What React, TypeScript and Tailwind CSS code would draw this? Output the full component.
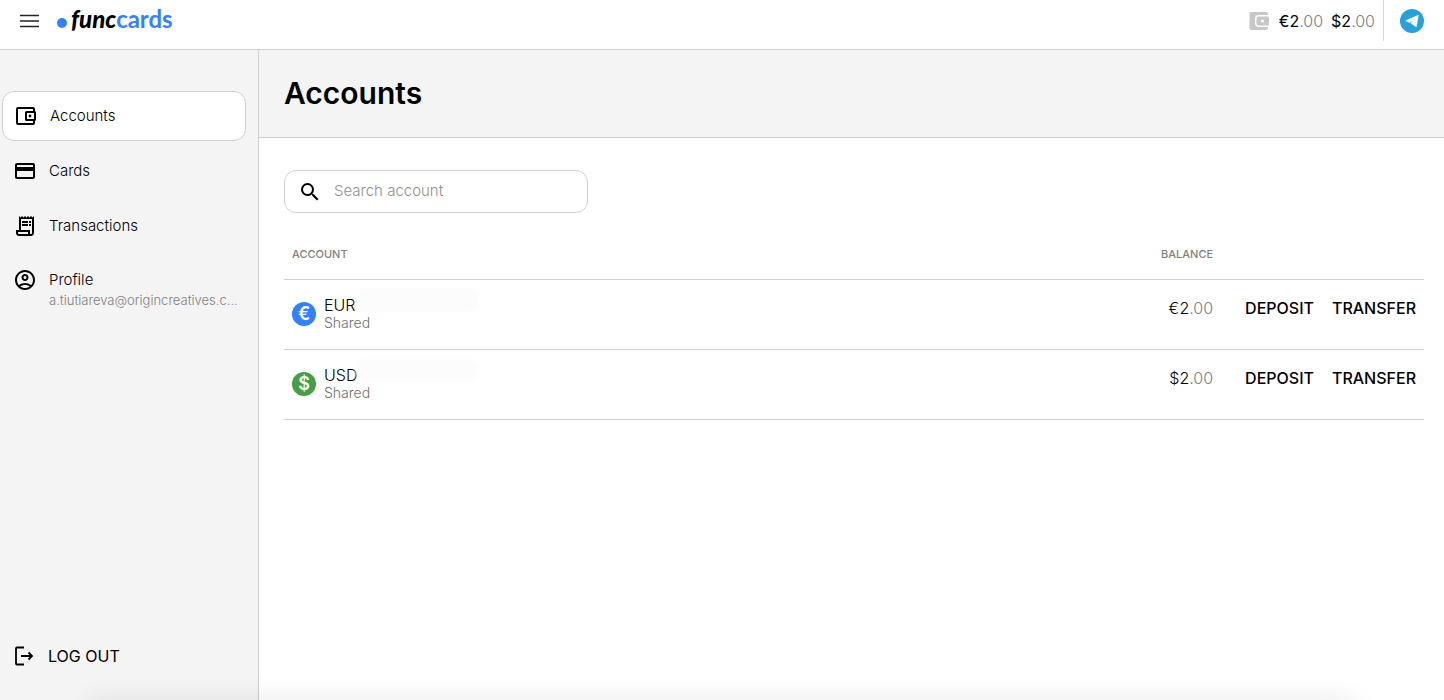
import React from 'react';
import {
  MdCreditCard,
  MdOutlineAccountCircle,
  MdOutlineReceiptLong,
  MdSearch,
} from 'react-icons/md';

type Account = {
  currency: string;
  symbol: string;
  owner: string;
  whole: string;
  cents: string;
  color: string;
};

const accounts: Account[] = [
  { currency: 'EUR', symbol: '€', owner: 'Shared', whole: '2', cents: '.00', color: 'bg-[#3580ff]' },
  { currency: 'USD', symbol: '$', owner: 'Shared', whole: '2', cents: '.00', color: 'bg-[#43a047]' },
];

const WalletIcon: React.FC = () => (
  <svg viewBox="0 0 24 24" className="h-6 w-6 shrink-0" fill="none" stroke="currentColor" strokeWidth="2" aria-hidden="true">
    <path d="M20 8V5a1 1 0 0 0-1-1H4a1 1 0 0 0-1 1v14a1 1 0 0 0 1 1h15a1 1 0 0 0 1-1v-3" strokeLinejoin="round" />
    <rect x="12" y="8" width="9" height="8" rx="0.500" />
    <circle cx="16" cy="12" r="1.400" fill="currentColor" stroke="none" />
  </svg>
);

const WalletFilledIcon: React.FC = () => (
  <svg viewBox="0 0 24 24" className="h-6 w-6 text-[#c8c8c8]" aria-hidden="true">
    <path
      fill="currentColor"
      d="M4 3h15a2 2 0 0 1 2 2v1h-9a4 4 0 0 0-4 4v4a4 4 0 0 0 4 4h9v1a2 2 0 0 1-2 2H4a1.500 1.500 0 0 1-1.500-1.500v-15A1.500 1.500 0 0 1 4 3z"
    />
    <path
      fill="currentColor"
      fillRule="evenodd"
      d="M12 7.500h8.500a1.500 1.500 0 0 1 1.500 1.500v6a1.500 1.500 0 0 1-1.500 1.500H12a2.500 2.500 0 0 1-2.500-2.500v-4a2.500 2.500 0 0 1 2.500-2.500zm3.500 3a1.500 1.500 0 1 0 0 3 1.500 1.500 0 0 0 0-3z"
    />
  </svg>
);

const TelegramIcon: React.FC = () => (
  <svg viewBox="0 0 24 24" className="h-6 w-6" aria-hidden="true">
    <circle cx="12" cy="12" r="12" fill="#29a0da" />
    <path d="M18.300 6.300 5.600 11.800l4.200 1.700 5.400-4.200-4.300 4.900 5.400 3.700z" fill="#fff" stroke="#fff" strokeWidth="0.600" strokeLinejoin="round" />
  </svg>
);

const LogoutIcon: React.FC = () => (
  <svg viewBox="0 0 24 24" className="h-6 w-6" fill="none" stroke="currentColor" strokeWidth="1.800" aria-hidden="true">
    <path d="M12 3.500H5a1 1 0 0 0-1 1v15a1 1 0 0 0 1 1h7" />
    <path d="M9 12h11M16.500 8.500 20 12l-3.500 3.500" />
  </svg>
);

const Amount: React.FC<{ symbol: string; whole: string; cents: string }> = ({ symbol, whole, cents }) => (
  <span>
    {symbol}
    {whole}
    <span className="font-light text-[#808080]">{cents}</span>
  </span>
);

const Header: React.FC = () => (
  <header className="border-b border-[#d0d0d0] bg-white pb-2">
    <div className="flex h-[41px] items-center justify-between pr-5 pl-[18px]">
      <div className="flex items-center gap-[15px]">
        <button type="button" aria-label="Menu">
          <svg viewBox="0 0 24 24" className="h-6 w-6" stroke="#222" strokeWidth="1.600" aria-hidden="true">
            <path d="M2 6.500h19M2 12h19M2 17.500h19" />
          </svg>
        </button>
        <a href="#" className="flex items-center gap-1 pb-1 font-[Lato,sans-serif] text-2xl leading-7 font-bold">
          <span className="mt-2 h-2.5 w-2.5 rounded-full bg-[#3580ff]" />
          <span>
            <span className="font-black italic">func</span>
            <span className="text-[#3580ff]">cards</span>
          </span>
        </a>
      </div>

      <div className="flex h-full items-center">
        <WalletFilledIcon />
        <div className="flex gap-2 px-2 text-base font-normal">
          <Amount symbol="€" whole="2" cents=".00" />
          <Amount symbol="$" whole="2" cents=".00" />
        </div>
        <a href="#" aria-label="Telegram" className="flex h-full items-center border-l border-[#d8d8d8] pl-4">
          <TelegramIcon />
        </a>
      </div>
    </div>
  </header>
);

const Sidebar: React.FC = () => (
  <aside className="flex w-[259px] shrink-0 flex-col justify-between border-r border-[#d0d0d0] bg-[#f4f4f4] pt-[41px] pb-8">
    <nav className="flex flex-col gap-[5px] pr-3 pl-0.5">
      <a href="#" className="flex h-[50px] items-center gap-3 rounded-xl border border-[#d0d0d0] bg-white px-[11px]">
        <WalletIcon />
        Accounts
      </a>
      <a href="#" className="flex h-[50px] items-center gap-3 px-[11px]">
        <MdCreditCard className="h-6 w-6" />
        Cards
      </a>
      <a href="#" className="flex h-[50px] items-center gap-3 px-[11px]">
        <MdOutlineReceiptLong className="h-6 w-6" />
        Transactions
      </a>
      <a href="#" className="flex items-start gap-3 pt-3 pl-[11px]">
        <MdOutlineAccountCircle className="h-6 w-6 shrink-0" />
        <span>
          <span className="block leading-6">Profile</span>
          <span className="block text-[13px] leading-4 whitespace-nowrap text-[#808080]">a.tiutiareva@origincreatives.c...</span>
        </span>
      </a>
    </nav>
    <button type="button" className="flex items-center gap-3 px-3 text-left text-base font-normal">
      <LogoutIcon />
      LOG OUT
    </button>
  </aside>
);

const AccountRow: React.FC<{ account: Account }> = ({ account }) => (
  <tr className="h-[70px] border-b border-[#d0d0d0]">
    <td className="px-2 align-middle">
      <div className="flex items-center gap-2">
        <span className={`flex h-6 w-6 items-center justify-center rounded-full text-lg leading-6 font-semibold text-white ${account.color}`}>
          {account.symbol}
        </span>
        <div className="relative">
          <div className="text-base leading-[18px]">{account.currency}</div>
          <div className="text-sm leading-[18px] text-[#707070]">{account.owner}</div>
          {/* hidden account number */}
          <span className="absolute -top-2 left-8 h-6 w-[124px] rounded-xl bg-[#fcfcfc] blur-[2px]" />
        </div>
      </div>
    </td>
    <td className="px-2 pt-4 text-right align-top text-base leading-6">
      <Amount symbol={account.symbol} whole={account.whole} cents={account.cents} />
    </td>
    <td className="w-px pt-4 pr-2 pl-6 align-top">
      <div className="flex gap-[18px] text-base leading-6 font-medium">
        <button type="button">DEPOSIT</button>
        <button type="button">TRANSFER</button>
      </div>
    </td>
  </tr>
);

const App: React.FC = () => {
  return (
    <div className="flex min-h-screen flex-col overflow-hidden bg-white font-[Inter,sans-serif] text-[15px] font-light text-black">
      <Header />
      <div className="flex grow">
        <Sidebar />
        <main className="min-w-0 grow">
          <div className="border-b border-[#d0d0d0] bg-[#f4f4f4] py-6 pl-[25px]">
            <h1 className="text-[30px] leading-[39px] font-semibold">Accounts</h1>
          </div>
          <div className="pt-8 pr-5 pl-[25px]">
            <label className="flex h-[43px] w-[304px] items-center gap-3 rounded-xl border border-[#d0d0d0] px-[13px]">
              <MdSearch className="h-6 w-6" />
              <input
                type="text"
                aria-label="Search account"
                placeholder="Search account"
                className="min-w-0 grow outline-none placeholder:text-[#909090]"
              />
            </label>

            <table className="mt-4 w-full border-collapse">
              <thead>
                <tr className="h-[50px] border-b border-[#d0d0d0] text-[11px] text-[#808080]">
                  <th className="px-2 text-left font-medium">ACCOUNT</th>
                  <th className="px-2 text-right font-medium">BALANCE</th>
                  <td />
                </tr>
              </thead>
              <tbody>
                {accounts.map((account) => (
                  <AccountRow key={account.currency} account={account} />
                ))}
              </tbody>
            </table>
          </div>
        </main>
      </div>
      {/* soft shadow along the bottom edge */}
      <div className="pointer-events-none fixed inset-x-[90px] top-full h-10 shadow-[0_0_28px_rgba(0,0,0,0.09)]" />
    </div>
  );
};

export default App;
